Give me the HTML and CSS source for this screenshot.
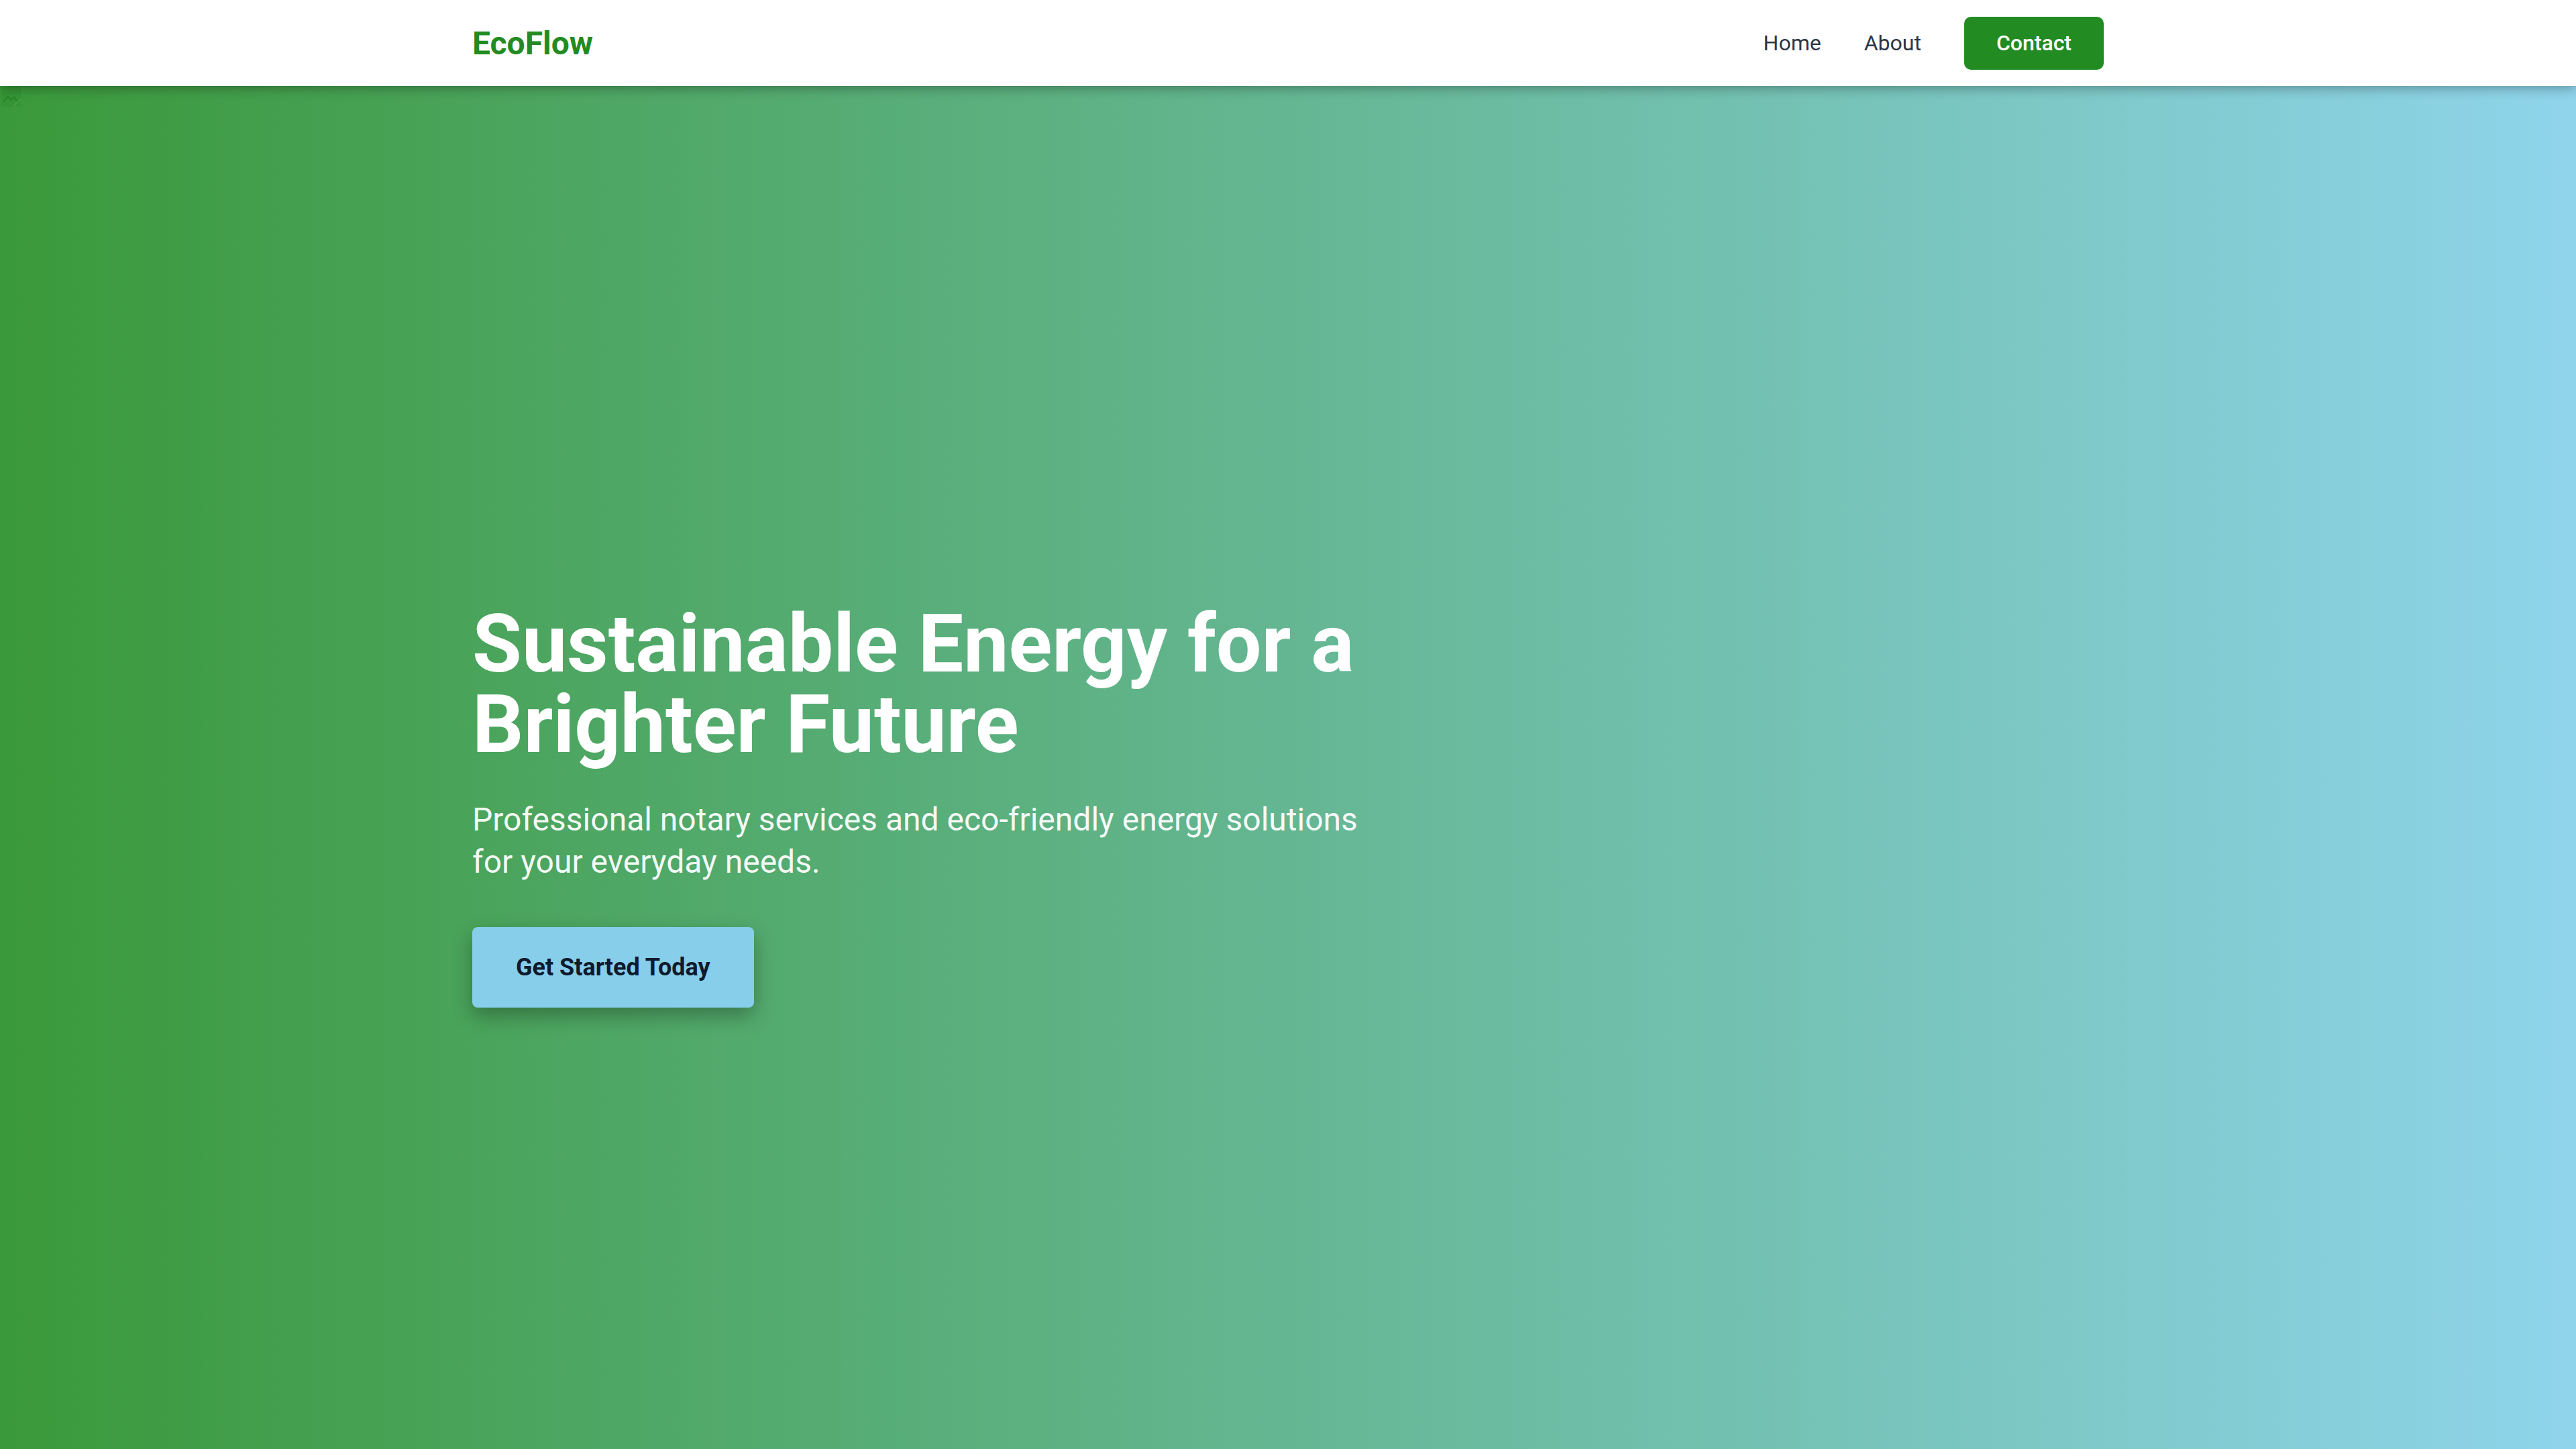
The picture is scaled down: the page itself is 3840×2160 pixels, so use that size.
FILE: index.html
```html
<!DOCTYPE html>
<html lang="en">
<head>
    <meta charset="UTF-8">
    <meta name="viewport" content="width=device-width, initial-scale=1.0">
    <title>EcoFlow</title>
    <link rel="stylesheet" href="styles.css">
</head>
<body>
    <header class="site-header">
        <div class="container header-inner">
            <a href="#" class="logo">EcoFlow</a>
            <nav class="nav">
                <a href="#" class="nav-link">Home</a>
                <a href="#" class="nav-link">About</a>
                <a href="#" class="nav-button">Contact</a>
            </nav>
        </div>
    </header>

    <section class="hero">
        <svg class="hero-photo" viewBox="0 0 32 32" aria-hidden="true">
            <rect x="1" y="1" width="30" height="30" fill="#2f8f2f" opacity="0.5"/>
            <path d="M5 24 L12 16 L17 21 L21 17 L27 24" fill="none" stroke="#1f7f1f" stroke-width="2" opacity="0.6"/>
            <path d="M20 30 L31 19" stroke="#5aa85a" stroke-width="2" opacity="0.5"/>
        </svg>
        <div class="container">
            <div class="hero-content">
                <h1 class="hero-title">Sustainable Energy for a Brighter Future</h1>
                <p class="hero-text">Professional notary services and eco-friendly energy solutions for your everyday needs.</p>
                <a href="#" class="cta-button">Get Started Today</a>
            </div>
        </div>
    </section>
</body>
</html>
```

FILE: styles.css
```css
body {
    margin: 0;
    font-family: Roboto, "Liberation Sans", Arial, sans-serif;
    color: #2d3748;
    background-color: #ffffff;
}

a {
    text-decoration: none;
}

.container {
    max-width: 2432px;
    margin: 0 auto;
}

/* top bar */
.site-header {
    position: relative;
    z-index: 2;
    background: white;
    box-shadow: 0 4px 16px rgba(0, 0, 0, 0.3);
}

.header-inner {
    height: 128px;
    display: flex;
    align-items: center;
    justify-content: space-between;
}

.logo {
    font-size: 48px;
    font-weight: 700;
    color: #228b22;
}

.nav {
    display: flex;
    align-items: center;
    gap: 64px;
}

.nav-link {
    font-size: 32px;
    font-weight: 400;
    color: #2d3748;
}

.nav-button {
    font-size: 32px;
    font-weight: 500;
    color: white;
    background-color: #228b22;
    padding: 16px 48px;
    line-height: 47px;
    border-radius: 10px;
}

/* hero */
.hero {
    position: relative;
    min-height: calc(100vh - 14px);
    display: flex;
    align-items: center;
    background: linear-gradient(to right, #3a993a, #8fd4eb);
}

.hero > .container {
    flex: 1;
}

.hero-photo {
    position: absolute;
    top: 0;
    left: 0;
    width: 32px;
    height: 32px;
}

.hero-content {
    max-width: 1350px;
}

.hero-title {
    margin: 0 0 50px;
    font-size: 120px;
    line-height: 1;
    font-weight: 700;
    color: white;
}

.hero-text {
    margin: 0 0 66px;
    font-size: 48px;
    line-height: 63px;
    color: rgba(255, 255, 255, 0.95);
}

.cta-button {
    display: inline-block;
    padding: 0 65px;
    height: 120px;
    line-height: 120px;
    font-size: 36px;
    font-weight: 700;
    color: #0f1b2d;
    background-color: #87ceeb;
    border-radius: 8px;
    box-shadow: 0 12px 30px rgba(0, 0, 0, 0.3);
}
```
